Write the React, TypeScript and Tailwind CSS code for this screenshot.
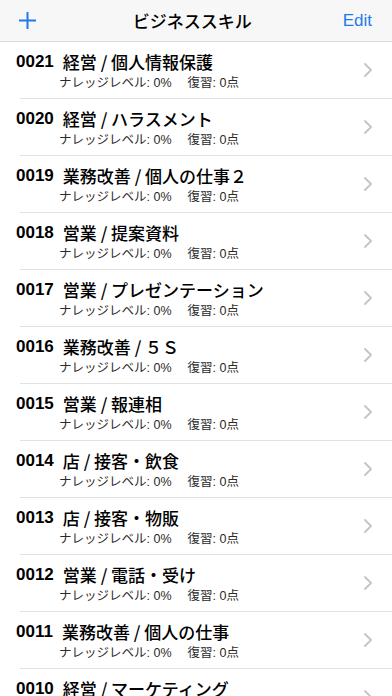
import React from 'react';

const items = [
	['0021', '経営 / 個人情報保護'],
	['0020', '経営 / ハラスメント'],
	['0019', '業務改善 / 個人の仕事２'],
	['0018', '営業 / 提案資料'],
	['0017', '営業 / プレゼンテーション'],
	['0016', '業務改善 / ５Ｓ'],
	['0015', '営業 / 報連相'],
	['0014', '店 / 接客・飲食'],
	['0013', '店 / 接客・物販'],
	['0012', '営業 / 電話・受け'],
	['0011', '業務改善 / 個人の仕事'],
	['0010', '経営 / マーケティング'],
];

function Chevron() {
	return (
		<svg width="8" height="14" viewBox="0 0 8 14" fill="none">
			<path d="M1 1l6 6-6 6" stroke="#c4c4c9" strokeWidth="1.8" strokeLinecap="round" strokeLinejoin="round" />
		</svg>
	);
}

export default function App() {
	return (
		<div
			className="h-[696px] w-[392px] overflow-hidden bg-white text-black"
			style={{ fontFamily: '"Liberation Sans", "Noto Sans CJK JP", sans-serif' }}
		>
			{/* Nav bar */}
			<div className="flex h-[42px] items-center justify-between border-b border-[#dcdcdc] bg-[#f7f7f7] pl-[19px] pr-[20px]">
				<svg width="17" height="17" viewBox="0 0 17 17" fill="none">
					<path d="M8.5 0.5v16M0.5 8.5h16" stroke="#1f7bea" strokeWidth="2" strokeLinecap="round" />
				</svg>
				<div className="ml-[6px] text-[17px] font-medium" style={{ fontFamily: '"Noto Sans CJK JP", sans-serif' }}>
					ビジネススキル
				</div>
				<div className="text-[17px] text-[#1f7bea]">Edit</div>
			</div>

			{/* List */}
			<div>
				{items.map(([no, title]) => (
					<div key={no} className="flex h-[57px] items-center pl-[20px]">
						<div className="flex h-full flex-1 items-center border-b border-[#e2e2e2] pr-5">
							<div className="-ml-[4px] flex-1 pt-[4px]">
								<div className="flex items-center text-[17px] leading-[20px]">
									<span className="font-bold">{no}</span>
									<span className="ml-[9px] font-medium" style={{ fontFamily: '"Noto Sans CJK JP", sans-serif' }}>
										{title}
									</span>
								</div>
								<div className="mt-[2px] pl-[43px] text-[12.5px] leading-[18px] text-[#2a2a2a]">
									ナレッジレベル: 0%　 復習: 0点
								</div>
							</div>
							<Chevron />
						</div>
					</div>
				))}
			</div>
		</div>
	);
}
